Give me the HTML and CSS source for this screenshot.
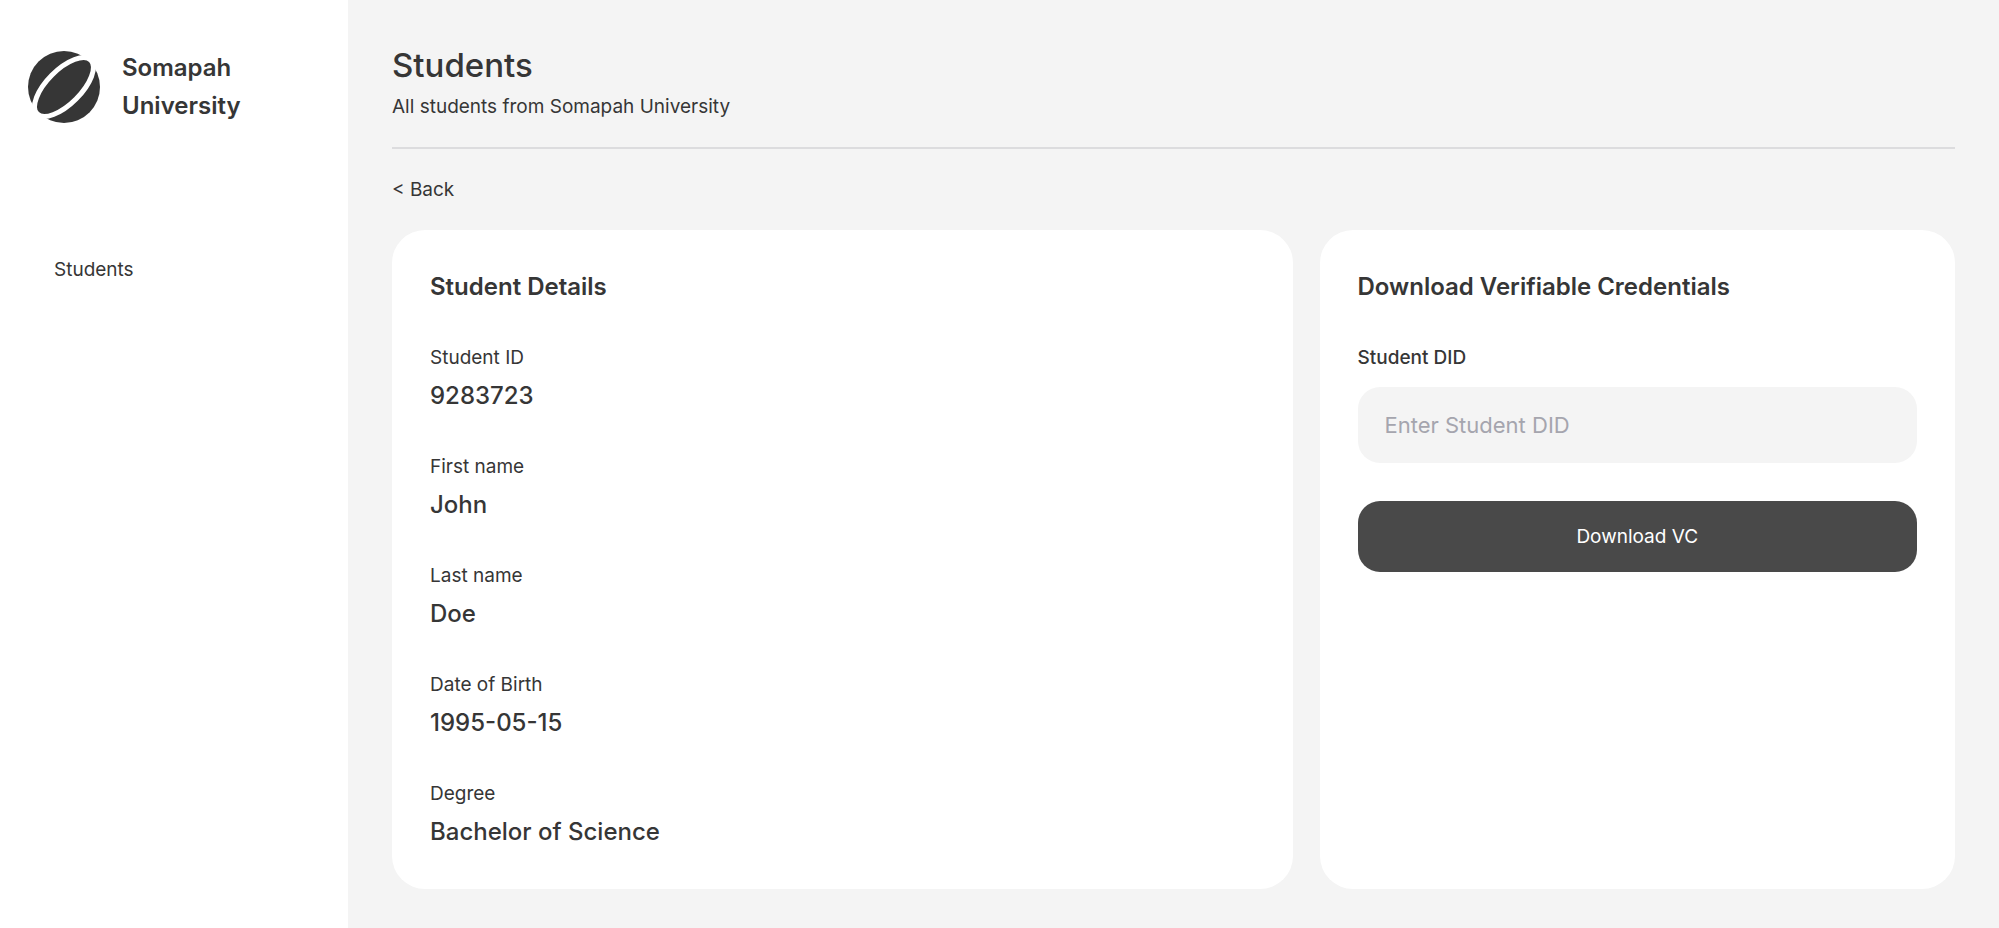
FILE: index.html
```html
<!DOCTYPE html>
<html lang="en">
<head>
  <meta charset="utf-8">
  <meta name="viewport" content="width=device-width, initial-scale=1">
  <title>Students - Somapah University</title>
  <link rel="stylesheet" href="styles.css">
</head>
<body>
  <div class="layout">
    <aside class="sidebar">
      <div class="brand">
        <svg class="brand-logo" viewBox="0 0 72 72" aria-hidden="true">
          <circle class="logo-disc" cx="36" cy="36" r="36"/>
          <ellipse class="logo-ring" cx="36" cy="36" rx="38" ry="17" transform="rotate(-45 36 36)"/>
        </svg>
        <span class="brand-name">Somapah University</span>
      </div>
      <nav class="nav">
        <a class="nav-link" href="#students">Students</a>
      </nav>
    </aside>

    <main class="main">
      <header class="page-header">
        <h1 class="page-title">Students</h1>
        <p class="page-subtitle">All students from Somapah University</p>
      </header>

      <a class="back-link" href="#students">&lt; Back</a>

      <div class="cards">
        <section class="card card-details">
          <h2 class="card-title">Student Details</h2>
          <dl class="fields">
            <div class="field"><dt>Student ID</dt><dd>9283723</dd></div>
            <div class="field"><dt>First name</dt><dd>John</dd></div>
            <div class="field"><dt>Last name</dt><dd>Doe</dd></div>
            <div class="field"><dt>Date of Birth</dt><dd>1995-05-15</dd></div>
            <div class="field"><dt>Degree</dt><dd>Bachelor of Science</dd></div>
          </dl>
        </section>

        <section class="card card-download">
          <h2 class="card-title">Download Verifiable Credentials</h2>
          <form class="download-form">
            <label class="input-label" for="student-did">Student DID</label>
            <input class="input" id="student-did" type="text" placeholder="Enter Student DID">
            <button class="button" type="button">Download VC</button>
          </form>
        </section>
      </div>
    </main>
  </div>
</body>
</html>
```
FILE: styles.css
```css
* {
  box-sizing: border-box;
  margin: 0;
  padding: 0;
}

body {
  background: #f4f4f4;
  color: #363636;
  font-family: Inter, "Liberation Sans", sans-serif;
  font-size: 19px;
  line-height: 27px;
}

a {
  color: inherit;
  text-decoration: none;
}

.layout {
  display: flex;
  min-height: 100vh;
}

.sidebar {
  flex: none;
  width: 348px;
  padding: 49px 28px;
  background: #fff;
}

.brand {
  display: flex;
  align-items: center;
  gap: 22px;
}

.brand-logo {
  flex: none;
  width: 72px;
  height: 72px;
}

.logo-disc {
  fill: #363636;
}

.logo-ring {
  fill: none;
  stroke: #fff;
  stroke-width: 5;
}

.brand-name {
  width: min-content;
  font-size: 24px;
  font-weight: 600;
  line-height: 38px;
}

.nav {
  display: flex;
  flex-direction: column;
  padding: 131px 26px 0;
}

.main {
  flex: 1;
  min-width: 0;
  padding: 43px 44px 38px;
}

.page-header {
  padding-bottom: 27px;
  border-bottom: 2px solid #dcdcde;
  margin-bottom: 27px;
}

.page-title {
  margin-bottom: 6px;
  font-size: 33px;
  font-weight: 500;
  line-height: 44px;
}

.back-link {
  display: inline-block;
}

.cards {
  display: grid;
  grid-template-columns: repeat(12, minmax(0, 1fr));
  gap: 27px;
  margin-top: 27px;
}

.card {
  padding: 38px;
  border-radius: 33px;
  background: #fff;
}

.card-details {
  grid-column: span 7;
}

.card-download {
  grid-column: span 5;
}

.card-title {
  margin-bottom: 38px;
  font-size: 24px;
  font-weight: 600;
  line-height: 38px;
}

.fields {
  display: grid;
  gap: 38px;
}

.field dt {
  margin-bottom: 6px;
}

.field dd {
  font-size: 24px;
  font-weight: 500;
  line-height: 38px;
}

.download-form {
  display: flex;
  flex-direction: column;
}

.input-label {
  font-weight: 500;
}

.input {
  width: 100%;
  height: 76px;
  margin: 16px 0 38px;
  padding: 0 27px;
  border: 0;
  border-radius: 22px;
  background: #f4f4f4;
  color: inherit;
  font: inherit;
  font-size: 22px;
}

.input::placeholder {
  color: #a5a5ae;
  opacity: 1;
}

.button {
  height: 71px;
  border: 0;
  border-radius: 22px;
  background: #494949;
  color: #fff;
  font: inherit;
}
```
